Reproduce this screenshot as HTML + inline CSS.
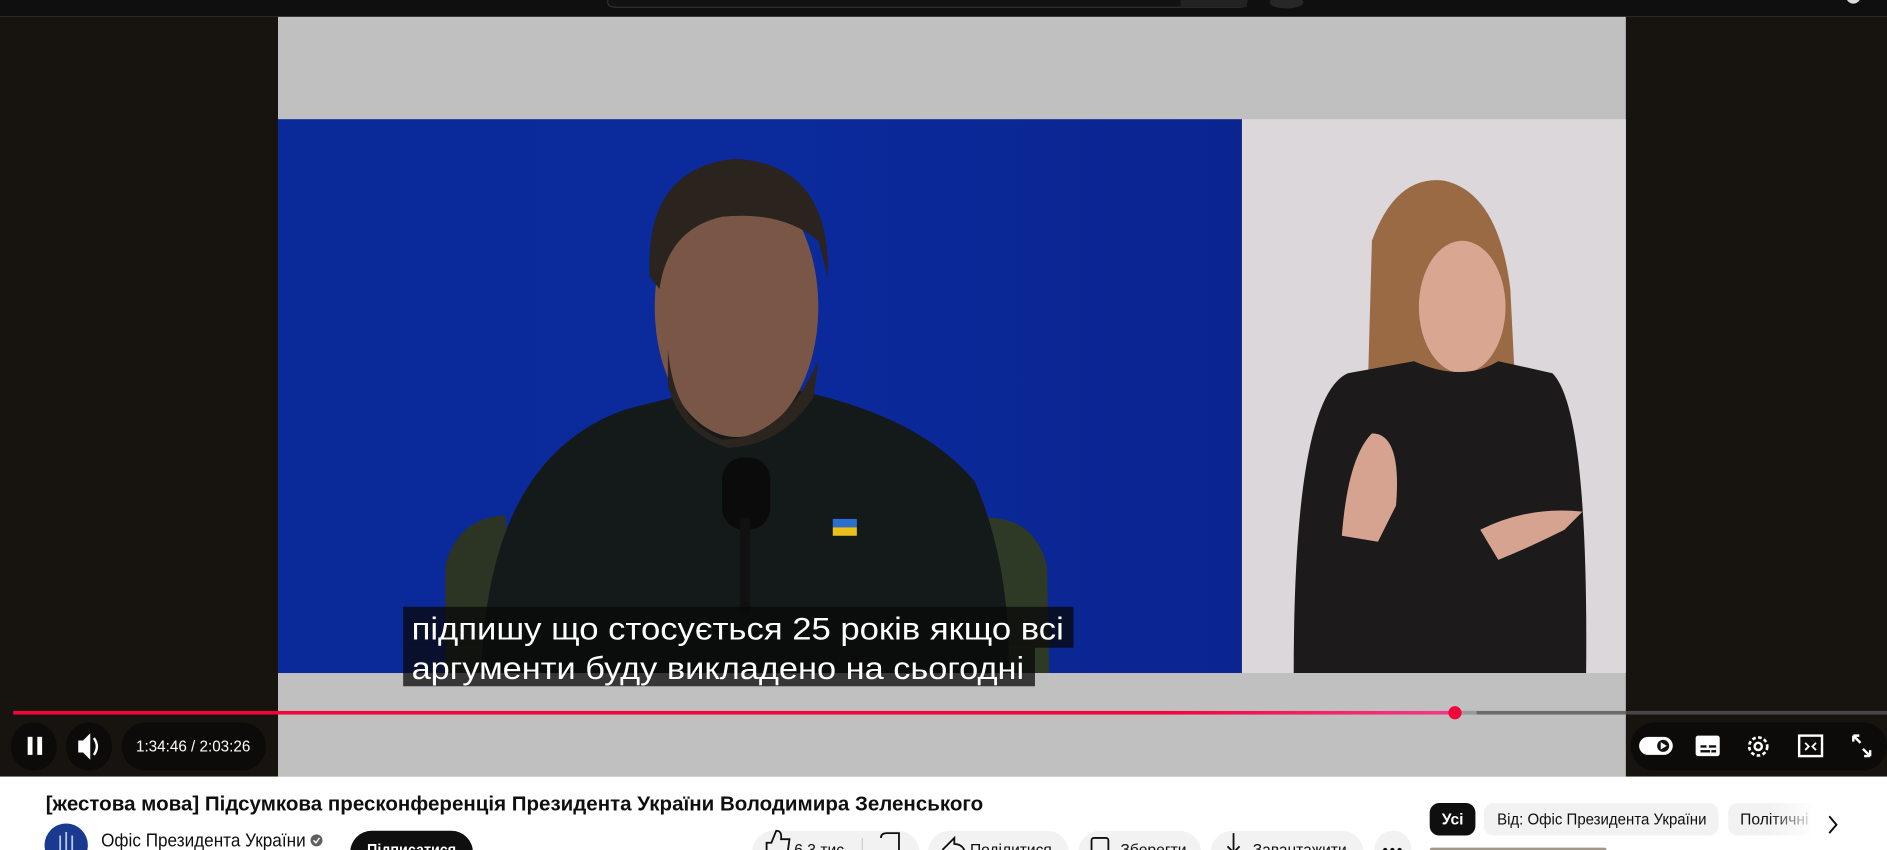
<!DOCTYPE html>
<html><head><meta charset="utf-8"><style>
html,body{margin:0;padding:0;background:#fff;width:1887px;height:850px;overflow:hidden}
svg{display:block}
text{font-family:"Liberation Sans","DejaVu Sans",sans-serif}
</style></head><body>
<svg width="1887" height="850" viewBox="0 0 1568 706" preserveAspectRatio="none" xmlns="http://www.w3.org/2000/svg">
<defs>
<linearGradient id="pg" x1="0" x2="1"><stop offset="0" stop-color="#f0063a"/><stop offset="0.8" stop-color="#f0063a"/><stop offset="1" stop-color="#f43a8a"/></linearGradient>
<linearGradient id="bl" x1="0" x2="1"><stop offset="0" stop-color="#0a2a9a"/><stop offset="0.5" stop-color="#0b2a9c"/><stop offset="1" stop-color="#0a2590"/></linearGradient>
<linearGradient id="fade" x1="0" x2="1"><stop offset="0" stop-color="#fff" stop-opacity="0"/><stop offset="1" stop-color="#fff"/></linearGradient>
</defs>
<rect width="1568" height="706" fill="#fff"/>
<rect width="1568" height="14" fill="#0f0f0f"/>
<path d="M505 0 V2 Q505 6 512 6 H1030 Q1036 6 1036 0" fill="#121212" stroke="#303030"/>
<rect x="981" y="0" width="55" height="6" fill="#222"/>
<ellipse cx="1069" cy="2" rx="14" ry="5" fill="#272727"/>
<circle cx="1540" cy="-3" r="6" fill="#ddd"/>
<rect y="14" width="1568" height="631" fill="#17130f"/>
<rect x="231" y="14" width="1120" height="631" fill="#c0c0c0"/>
<rect x="231" y="99" width="801" height="460" fill="url(#bl)"/>
<rect x="1032" y="99" width="319" height="460" fill="#dcd7da"/>
<path d="M370 470 Q380 430 420 428 L430 559 H370Z" fill="#2c3524"/>
<path d="M820 430 Q860 430 870 470 L872 559 H815Z" fill="#2e3a26"/>
<path d="M400 559 Q405 380 520 340 L560 330 L640 320 Q760 340 810 400 Q840 470 838 559Z" fill="#14191a"/>
<ellipse cx="612" cy="255" rx="68" ry="108" fill="#7a5646"/>
<path d="M540 230 Q535 140 610 132 Q690 135 688 230 L680 200 Q650 175 600 180 Q555 190 548 240Z" fill="#2a231e"/>
<path d="M555 290 Q560 350 600 365 Q650 365 680 300 L676 330 Q650 370 605 372 Q565 360 555 320Z" fill="#2c241f"/>
<rect x="600" y="380" width="40" height="60" rx="18" fill="#0b0b0c"/>
<rect x="615" y="430" width="8" height="80" fill="#111"/>
<rect x="692" y="431" width="20" height="7" fill="#2a6fd0"/><rect x="692" y="438" width="20" height="7" fill="#e8c21a"/>
<path d="M1140 200 Q1160 145 1200 150 Q1245 160 1255 240 L1262 380 L1135 380Z" fill="#9a6a44"/>
<ellipse cx="1215" cy="255" rx="36" ry="55" fill="#d9a692"/>
<path d="M1075 559 Q1075 330 1120 310 L1175 300 Q1215 318 1245 300 L1290 310 Q1320 340 1318 559Z" fill="#1c1a1b"/>
<path d="M1115 445 Q1120 380 1140 360 Q1165 360 1160 420 L1145 450Z" fill="#d6a390"/>
<path d="M1230 440 Q1270 420 1315 425 L1300 440 Q1270 455 1245 465Z" fill="#d6a390"/>
<rect x="335" y="504" width="557" height="34" fill="#080808" fill-opacity="0.75"/>
<rect x="335" y="538" width="525" height="32" fill="#080808" fill-opacity="0.75"/>
<text x="342" y="531" font-size="26" fill="#fff" textLength="542" lengthAdjust="spacingAndGlyphs">підпишу що стосується 25 років якщо всі</text>
<text x="342" y="564" font-size="26" fill="#fff" textLength="509" lengthAdjust="spacingAndGlyphs">аргументи буду викладено на сьогодні</text>
<rect x="1209" y="590.5" width="359" height="3" fill="#555" fill-opacity="0.8"/>
<rect x="1209" y="590.5" width="18" height="3" fill="#999"/>
<rect x="11" y="590.5" width="1198" height="3" fill="url(#pg)"/>
<circle cx="1209" cy="592" r="5.5" fill="#f0063a"/>
<rect x="9" y="600" width="38" height="40" rx="19" fill="#0c0a09" fill-opacity="0.85"/>
<rect x="23" y="612" width="4" height="15" fill="#fff"/><rect x="31" y="612" width="4" height="15" fill="#fff"/>
<rect x="55" y="600" width="38" height="40" rx="19" fill="#0c0a09" fill-opacity="0.85"/>
<path d="M65 615 H69 L75 609 V631 L69 625 H65Z" fill="#fff"/>
<path d="M78 613 Q83 620 78 627" stroke="#fff" stroke-width="2" fill="none"/>
<rect x="101" y="600" width="120" height="40" rx="20" fill="#0c0a09" fill-opacity="0.85"/>
<text x="113" y="624" font-size="13" fill="#fff" textLength="95" lengthAdjust="spacingAndGlyphs">1:34:46 / 2:03:26</text>
<rect x="1355" y="600" width="213" height="40" rx="20" fill="#0c0a09" fill-opacity="0.85"/>
<rect x="1362" y="612" width="28" height="15" rx="7.5" fill="#fff"/>
<circle cx="1382" cy="619.5" r="5" fill="#111"/><path d="M1380 616.5 L1385 619.5 L1380 622.5Z" fill="#fff"/>
<rect x="1409" y="611" width="20" height="17" rx="2" fill="#fff"/>
<rect x="1413" y="619" width="5" height="2" fill="#111"/><rect x="1420" y="619" width="6" height="2" fill="#111"/>
<rect x="1413" y="623" width="8" height="2" fill="#111"/><rect x="1422" y="623" width="4" height="2" fill="#111"/>
<circle cx="1461" cy="620" r="7.5" fill="none" stroke="#fff" stroke-width="2.2" stroke-dasharray="3 2"/>
<circle cx="1461" cy="620" r="3" fill="none" stroke="#fff" stroke-width="2"/>
<rect x="1495" y="611" width="19" height="17" fill="none" stroke="#fff" stroke-width="2"/>
<path d="M1500 617 L1503 620 L1500 623 M1509 617 L1506 620 L1509 623" stroke="#fff" stroke-width="1.5" fill="none"/>
<path d="M1540 611 L1546 617 M1540 611 V616 M1540 611 H1545 M1554 628 L1548 622 M1554 628 V623 M1554 628 H1549" stroke="#fff" stroke-width="2" fill="none"/>
<text x="38" y="673" font-size="17" font-weight="bold" fill="#0f0f0f" textLength="779" lengthAdjust="spacingAndGlyphs">[жестова мова] Підсумкова пресконференція Президента України Володимира Зеленського</text>
<circle cx="55" cy="702" r="18" fill="#1a3a8f"/>
<path d="M50 694 V708 M55 691 V710 M60 694 V708" stroke="#b8c8ee" stroke-width="1.5"/>
<text x="84" y="703" font-size="15" font-weight="500" fill="#0f0f0f" textLength="170" lengthAdjust="spacingAndGlyphs">Офіс Президента України</text>
<circle cx="263" cy="698" r="5" fill="#606060"/><path d="M260.5 698 L262.5 700 L265.5 696" stroke="#fff" stroke-width="1.2" fill="none"/>
<rect x="291" y="690" width="102" height="36" rx="18" fill="#0f0f0f"/>
<text x="305" y="710" font-size="13" font-weight="bold" fill="#fff" textLength="74" lengthAdjust="spacingAndGlyphs">Підписатися</text>
<rect x="625" y="690" width="139" height="36" rx="18" fill="#f2f2f2"/>
<path d="M637 712 V700 L641 700 L645 690 Q650 690 649 697 L656 697 L654 712Z" fill="none" stroke="#0f0f0f" stroke-width="1.5"/>
<text x="660" y="710" font-size="13" fill="#0f0f0f">6,3 тис.</text>
<rect x="716" y="696" width="1" height="20" fill="#ccc"/>
<path d="M732 696 Q732 692 737 692 H747 V712" fill="none" stroke="#0f0f0f" stroke-width="1.5"/>
<rect x="771" y="690" width="117" height="36" rx="18" fill="#f2f2f2"/>
<path d="M783 706 L793 696 V701 Q800 701 802 708" fill="none" stroke="#0f0f0f" stroke-width="1.5"/>
<text x="806" y="710" font-size="13" fill="#0f0f0f" textLength="68" lengthAdjust="spacingAndGlyphs">Поділитися</text>
<rect x="896" y="690" width="102" height="36" rx="18" fill="#f2f2f2"/>
<rect x="907" y="696" width="14" height="18" rx="2" fill="none" stroke="#0f0f0f" stroke-width="1.5"/>
<text x="931" y="710" font-size="13" fill="#0f0f0f" textLength="55" lengthAdjust="spacingAndGlyphs">Зберегти</text>
<rect x="1006" y="690" width="127" height="36" rx="18" fill="#f2f2f2"/>
<path d="M1025 692 V708 M1020 703 L1025 708 L1030 703" stroke="#0f0f0f" stroke-width="1.5" fill="none"/>
<text x="1041" y="710" font-size="13" fill="#0f0f0f" textLength="78" lengthAdjust="spacingAndGlyphs">Завантажити</text>
<rect x="1142" y="690" width="31" height="36" rx="15.5" fill="#f2f2f2"/>
<circle cx="1151" cy="706" r="1.8" fill="#0f0f0f"/><circle cx="1157" cy="706" r="1.8" fill="#0f0f0f"/><circle cx="1163" cy="706" r="1.8" fill="#0f0f0f"/>
<rect x="1188" y="667" width="38" height="27" rx="8" fill="#0f0f0f"/>
<text x="1198" y="685" font-size="13" font-weight="bold" fill="#fff">Усі</text>
<rect x="1233" y="667" width="195" height="27" rx="8" fill="#f2f2f2"/>
<text x="1244" y="685" font-size="13" font-weight="500" fill="#0f0f0f" textLength="174" lengthAdjust="spacingAndGlyphs">Від: Офіс Президента України</text>
<rect x="1436" y="667" width="80" height="27" rx="8" fill="#f2f2f2"/>
<text x="1446" y="685" font-size="13" font-weight="500" fill="#0f0f0f">Політичні</text>
<rect x="1470" y="664" width="40" height="33" fill="url(#fade)"/>
<rect x="1505" y="664" width="63" height="33" fill="#fff"/>
<path d="M1520 678 L1526 685 L1520 692" stroke="#0f0f0f" stroke-width="1.6" fill="none"/>
<rect x="1188" y="704" width="147" height="4" rx="2" fill="#a09888"/>
</svg>
</body></html>
